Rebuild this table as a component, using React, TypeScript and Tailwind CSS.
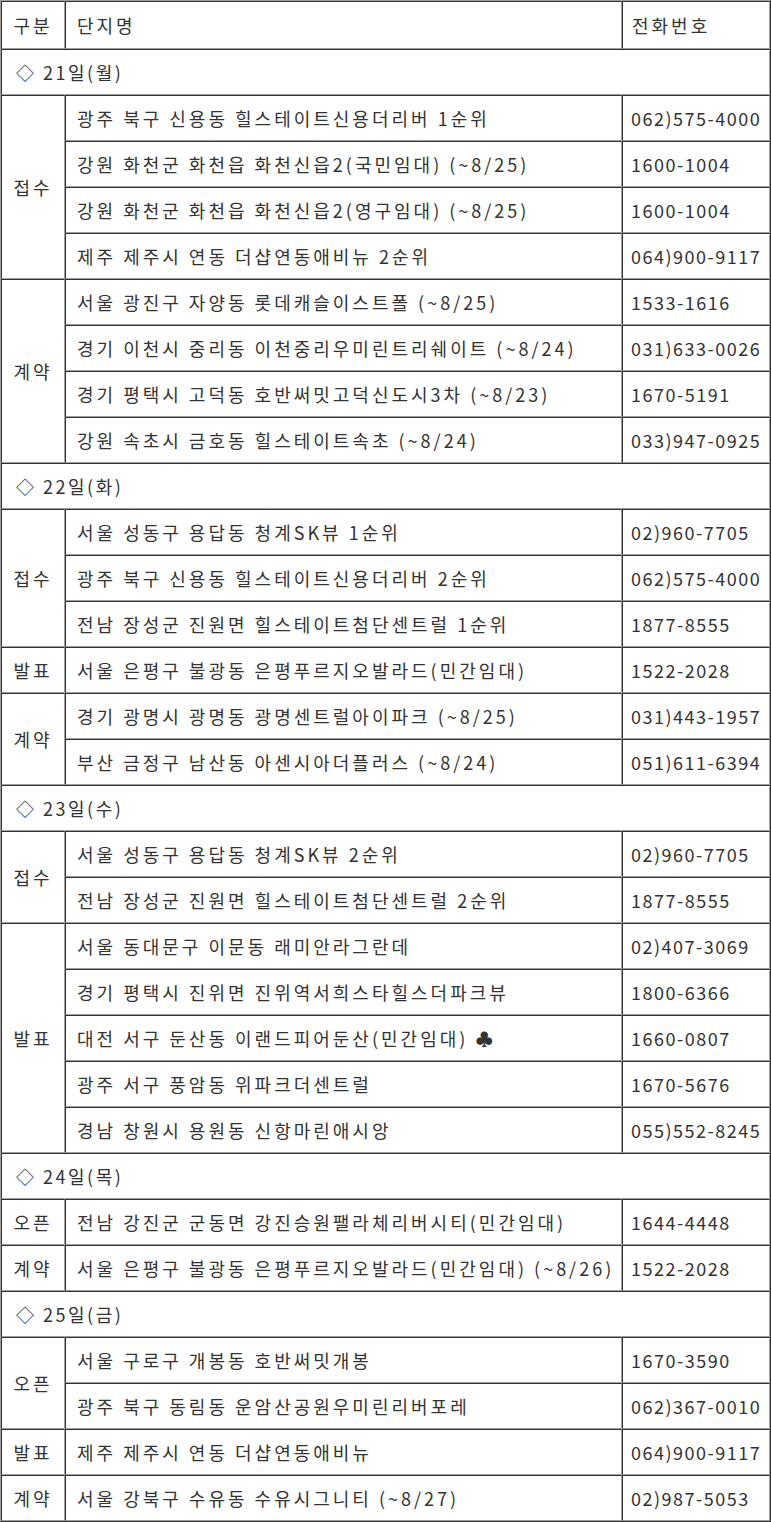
type Item = { name: string; tel: string };
type Group = { kind: string; items: Item[] };
type Day = { label: string; groups: Group[] };

const days: Day[] = [
  {
    label: "◇ 21일(월)",
    groups: [
      {
        kind: "접수",
        items: [
          { name: "광주 북구 신용동 힐스테이트신용더리버 1순위", tel: "062)575-4000" },
          { name: "강원 화천군 화천읍 화천신읍2(국민임대) (~8/25)", tel: "1600-1004" },
          { name: "강원 화천군 화천읍 화천신읍2(영구임대) (~8/25)", tel: "1600-1004" },
          { name: "제주 제주시 연동 더샵연동애비뉴 2순위", tel: "064)900-9117" },
        ],
      },
      {
        kind: "계약",
        items: [
          { name: "서울 광진구 자양동 롯데캐슬이스트폴 (~8/25)", tel: "1533-1616" },
          { name: "경기 이천시 중리동 이천중리우미린트리쉐이트 (~8/24)", tel: "031)633-0026" },
          { name: "경기 평택시 고덕동 호반써밋고덕신도시3차 (~8/23)", tel: "1670-5191" },
          { name: "강원 속초시 금호동 힐스테이트속초 (~8/24)", tel: "033)947-0925" },
        ],
      },
    ],
  },
  {
    label: "◇ 22일(화)",
    groups: [
      {
        kind: "접수",
        items: [
          { name: "서울 성동구 용답동 청계SK뷰 1순위", tel: "02)960-7705" },
          { name: "광주 북구 신용동 힐스테이트신용더리버 2순위", tel: "062)575-4000" },
          { name: "전남 장성군 진원면 힐스테이트첨단센트럴 1순위", tel: "1877-8555" },
        ],
      },
      {
        kind: "발표",
        items: [{ name: "서울 은평구 불광동 은평푸르지오발라드(민간임대)", tel: "1522-2028" }],
      },
      {
        kind: "계약",
        items: [
          { name: "경기 광명시 광명동 광명센트럴아이파크 (~8/25)", tel: "031)443-1957" },
          { name: "부산 금정구 남산동 아센시아더플러스 (~8/24)", tel: "051)611-6394" },
        ],
      },
    ],
  },
  {
    label: "◇ 23일(수)",
    groups: [
      {
        kind: "접수",
        items: [
          { name: "서울 성동구 용답동 청계SK뷰 2순위", tel: "02)960-7705" },
          { name: "전남 장성군 진원면 힐스테이트첨단센트럴 2순위", tel: "1877-8555" },
        ],
      },
      {
        kind: "발표",
        items: [
          { name: "서울 동대문구 이문동 래미안라그란데", tel: "02)407-3069" },
          { name: "경기 평택시 진위면 진위역서희스타힐스더파크뷰", tel: "1800-6366" },
          { name: "대전 서구 둔산동 이랜드피어둔산(민간임대) ♣", tel: "1660-0807" },
          { name: "광주 서구 풍암동 위파크더센트럴", tel: "1670-5676" },
          { name: "경남 창원시 용원동 신항마린애시앙", tel: "055)552-8245" },
        ],
      },
    ],
  },
  {
    label: "◇ 24일(목)",
    groups: [
      {
        kind: "오픈",
        items: [{ name: "전남 강진군 군동면 강진승원팰라체리버시티(민간임대)", tel: "1644-4448" }],
      },
      {
        kind: "계약",
        items: [{ name: "서울 은평구 불광동 은평푸르지오발라드(민간임대) (~8/26)", tel: "1522-2028" }],
      },
    ],
  },
  {
    label: "◇ 25일(금)",
    groups: [
      {
        kind: "오픈",
        items: [
          { name: "서울 구로구 개봉동 호반써밋개봉", tel: "1670-3590" },
          { name: "광주 북구 동림동 운암산공원우미린리버포레", tel: "062)367-0010" },
        ],
      },
      {
        kind: "발표",
        items: [{ name: "제주 제주시 연동 더샵연동애비뉴", tel: "064)900-9117" }],
      },
      {
        kind: "계약",
        items: [{ name: "서울 강북구 수유동 수유시그니티 (~8/27)", tel: "02)987-5053" }],
      },
    ],
  },
];

// inset cell border like a table with border=1
const cell =
  "border border-t-[#333] border-l-[#333] border-b-[#a0a0a0] border-r-[#a0a0a0] align-middle";

export default function App() {
  return (
    <div className="bg-white w-[771px] font-['Noto_Sans_CJK_KR','Noto_Sans',sans-serif] text-[18px] text-[#333]">
      <table className="w-[771px] border-separate border-spacing-0 border border-t-[#a0a0a0] border-l-[#a0a0a0] border-b-[#333] border-r-[#333] table-fixed">
        <colgroup>
          <col className="w-[64px]" />
          <col className="w-[557px]" />
          <col className="w-[148px]" />
        </colgroup>
        <tbody>
          <tr className="h-[48px]">
            <td className={`${cell} text-center tracking-[3px]`}>구분</td>
            <td className={`${cell} pl-[11px] tracking-[3px]`}>단지명</td>
            <td className={`${cell} pl-[9px] tracking-[3px]`}>전화번호</td>
          </tr>
          {days.map((day) => (
            <DayRows key={day.label} day={day} />
          ))}
        </tbody>
      </table>
    </div>
  );
}

function DayRows({ day }: { day: Day }) {
  return (
    <>
      <tr className="h-[46px]">
        <td colSpan={3} className={`${cell} pl-[14px] tracking-[2.5px]`}>
          {day.label}
        </td>
      </tr>
      {day.groups.map((g, gi) =>
        g.items.map((it, i) => (
          <tr key={`${gi}-${i}`} className="h-[46px]">
            {i === 0 && (
              <td rowSpan={g.items.length} className={`${cell} text-center tracking-[3px]`}>
                {g.kind}
              </td>
            )}
            <td className={`${cell} pl-[11px] whitespace-nowrap tracking-[3px]`}>{it.name}</td>
            <td className={`${cell} pl-[8px] whitespace-nowrap tracking-[1.5px]`}>{it.tel}</td>
          </tr>
        ))
      )}
    </>
  );
}
